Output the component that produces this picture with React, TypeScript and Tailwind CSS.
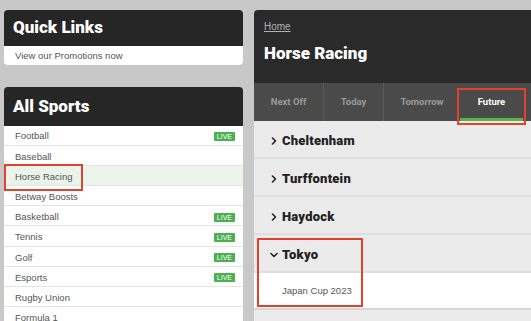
import React from "react";

const SPORTS: { name: string; live?: boolean; active?: boolean }[] = [
  { name: "Football", live: true },
  { name: "Baseball" },
  { name: "Horse Racing", active: true },
  { name: "Betway Boosts" },
  { name: "Basketball", live: true },
  { name: "Tennis", live: true },
  { name: "Golf", live: true },
  { name: "Esports", live: true },
  { name: "Rugby Union" },
  { name: "Formula 1" },
];

const TABS = [
  { label: "Next Off", w: "w-[69px]" },
  { label: "Today", w: "w-[60px]" },
  { label: "Tomorrow", w: "w-[77px]" },
  { label: "Future", w: "w-[63px]", active: true },
];

function Chevron({ down }: { down?: boolean }) {
  return (
    <svg width="8" height="8" viewBox="0 0 8 8" className="shrink-0">
      <path
        d={down ? "M1 2.5 L4 5.5 L7 2.5" : "M2.5 1 L5.5 4 L2.5 7"}
        fill="none"
        stroke="#222"
        strokeWidth="1.6"
        strokeLinecap="round"
        strokeLinejoin="round"
      />
    </svg>
  );
}

function Meeting({ name, open }: { name: string; open?: boolean }) {
  return (
    <div className="flex h-[38px] items-center gap-[4px] border-b-2 border-[#dedede] bg-[#ebebeb] pl-[16px] pt-[4px]">
      <Chevron down={open} />
      <span className="font-['Roboto',sans-serif] text-[13px] font-black tracking-[0.2px] text-[#222]">
        {name}
      </span>
    </div>
  );
}

export default function App() {
  return (
    <div className="relative flex h-[321px] w-[531px] gap-[11px] overflow-hidden bg-[#c8c8c8] pl-[4px] pt-[10px] font-['Liberation_Sans',Arial,sans-serif]">
      <div className="flex w-[239px] shrink-0 flex-col">
        <div className="overflow-hidden rounded-[4px]">
          <div className="flex h-[36px] items-center bg-[#262626] px-[9px] font-['Roboto',sans-serif] text-[17px] font-black text-white">
            Quick Links
          </div>
          <div className="flex h-[20px] items-center bg-white px-[11px] text-[9.5px] text-[#555]">
            View our Promotions now
          </div>
        </div>
        <div className="mt-[22px] overflow-hidden rounded-t-[4px]">
          <div className="flex h-[39px] items-center bg-[#262626] px-[9px] pt-[2px] font-['Roboto',sans-serif] text-[17px] font-black text-white">
            All Sports
          </div>
          {SPORTS.map((s) => (
            <div
              key={s.name}
              className={
                "flex h-[20.2px] items-center justify-between border-b border-[#e4e4e4] pl-[11px] pr-[8px] pt-[3px] text-[9.5px] text-[#555] " +
                (s.active ? "bg-[#eaf4ea]" : "bg-white")
              }
            >
              <span>{s.name}</span>
              {s.live ? (
                <span className="rounded-[1px] bg-[#4caf50] px-[3px] text-[7px] leading-[9px] text-white">
                  LIVE
                </span>
              ) : null}
            </div>
          ))}
        </div>
      </div>

      <div className="flex w-[277px] shrink-0 flex-col">
        <div className="h-[73px] rounded-tl-[4px] bg-[#2a2a2a] px-[10px] pt-[9px]">
          <div className="text-[10px] text-[#b0b0b0] underline">Home</div>
          <div className="mt-[7px] font-['Roboto',sans-serif] text-[17px] font-black text-white">
            Horse Racing
          </div>
        </div>
        <div className="flex h-[38px] bg-[#4a4a4a] font-['Roboto',sans-serif] text-[9.5px] font-bold">
          {TABS.map((t, i) => (
            <div
              key={t.label}
              className={
                "relative flex items-center justify-center " +
                t.w +
                (t.active ? " text-white" : " text-[#9a9a9a]") +
                (i > 0 && i < 3 ? " border-l border-[#5a5a5a]" : "")
              }
            >
              {t.label}
              {t.active ? (
                <div className="absolute bottom-0 left-0 right-0 h-[3px] bg-[#56b34a]" />
              ) : null}
            </div>
          ))}
        </div>
        <Meeting name="Cheltenham" />
        <Meeting name="Turffontein" />
        <Meeting name="Haydock" />
        <Meeting name="Tokyo" open />
        <div className="flex h-[37px] items-center border-b-2 border-[#d6d6d6] bg-white pl-[28px] pt-[2px] text-[9.5px] text-[#555]">
          Japan Cup 2023
        </div>
        <div className="flex-1 bg-[#ebebeb]" />
      </div>

      <div className="absolute left-[4px] top-[164px] h-[27px] w-[79px] border-2 border-[#e2412c]" />
      <div className="absolute left-[457px] top-[88px] h-[37px] w-[69px] border-2 border-[#e2412c]" />
      <div className="absolute left-[257px] top-[238px] h-[69px] w-[106px] border-2 border-[#e2412c]" />
    </div>
  );
}
